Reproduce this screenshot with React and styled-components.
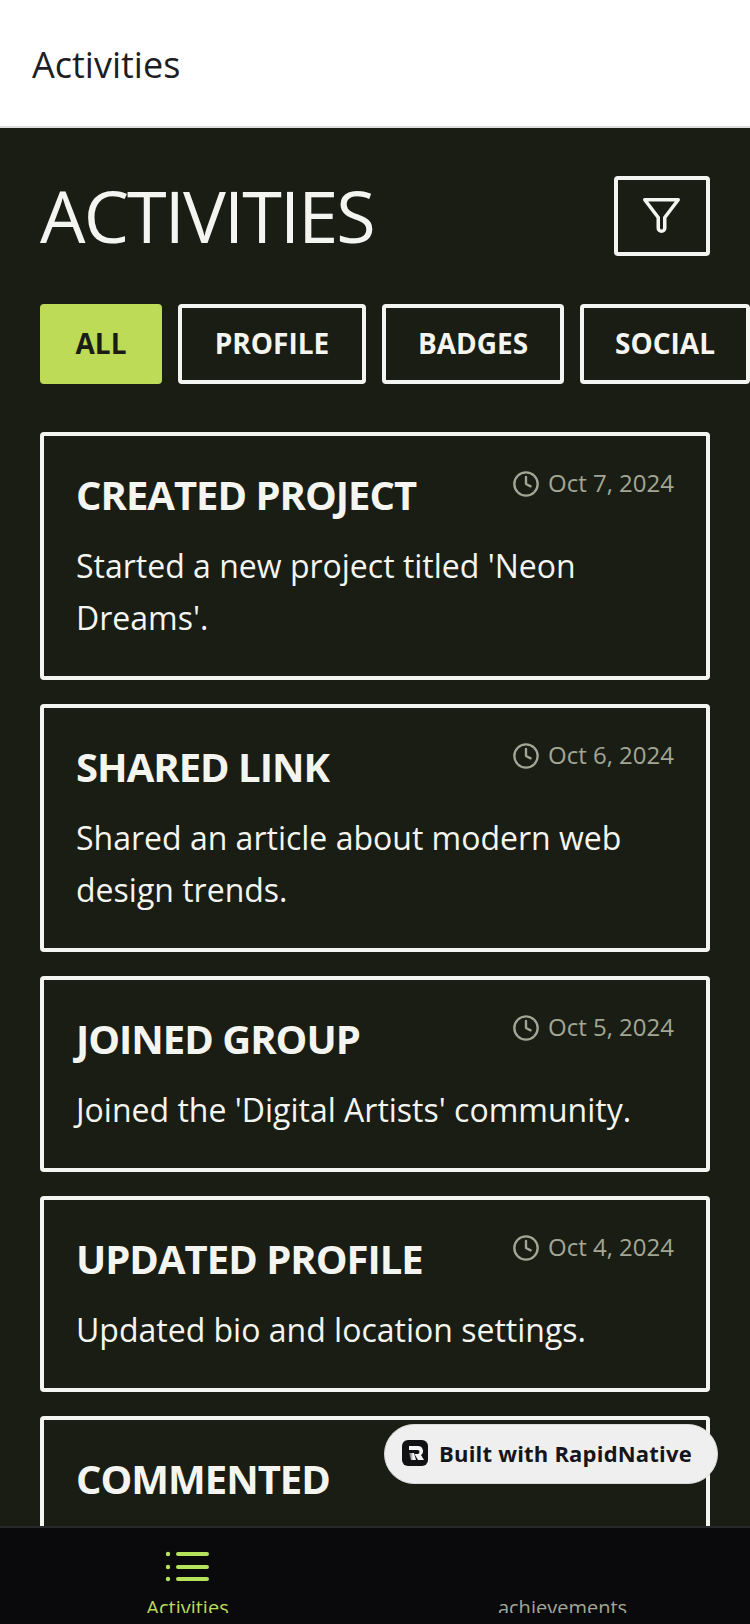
import React from 'react';
import styled, { createGlobalStyle } from 'styled-components';
import { Clock } from 'lucide-react';

const Global = createGlobalStyle`
  html, body { margin: 0; padding: 0; background: #1a1d14; }
  body { font-family: 'Open Sans', 'Noto Sans', sans-serif; }
`;

const Screen = styled.div`
  width: 750px;
  height: 1624px;
  display: flex;
  flex-direction: column;
  overflow: hidden;
  position: relative;
`;

const TopBar = styled.header`
  flex: none;
  height: 128px;
  box-sizing: border-box;
  background: #fff;
  border-bottom: 2px solid #dcdcdc;
  display: flex;
  align-items: center;
  padding: 2px 0 0 32px;
  font-size: 36px;
  color: #1c1e24;
`;

const Main = styled.main`
  flex: 1;
  min-height: 0;
  overflow: hidden;
  background: #1a1d14;
  padding: 48px 40px 0;
`;

const TitleRow = styled.div`
  display: flex;
  justify-content: space-between;
  align-items: center;
  height: 80px;
  margin-bottom: 48px;
`;

const Title = styled.h1`
  margin: 0;
  font-size: 72px;
  font-weight: 400;
  letter-spacing: -1.9px;
  color: #f4f5f0;
  line-height: 78px;
  padding-bottom: 2px;
`;

const FilterButton = styled.button`
  width: 96px;
  height: 80px;
  box-sizing: border-box;
  border: 4px solid #f4f5f0;
  border-radius: 4px;
  background: transparent;
  color: #f4f5f0;
  display: flex;
  align-items: center;
  justify-content: center;
  padding: 0;
`;

const Chips = styled.div`
  display: flex;
  gap: 16px;
  margin-bottom: 48px;
  width: 760px;
`;

const Chip = styled.div`
  flex: none;
  width: ${p => p.$width}px;
  height: 80px;
  box-sizing: border-box;
  padding-bottom: 2px;
  border: 4px solid ${p => (p.$active ? '#bddb57' : '#f4f5f0')};
  border-radius: 4px;
  background: ${p => (p.$active ? '#bddb57' : 'transparent')};
  color: ${p => (p.$active ? '#1a1d14' : '#f4f5f0')};
  font-size: 28px;
  font-weight: 700;
  display: flex;
  align-items: center;
  justify-content: center;
`;

const Cards = styled.div`
  display: flex;
  flex-direction: column;
  gap: 24px;
`;

const Card = styled.article`
  box-sizing: border-box;
  border: 4px solid #f4f5f0;
  border-radius: 4px;
  padding: 32px;
`;

const CardHead = styled.div`
  display: flex;
  justify-content: space-between;
  align-items: flex-start;
  margin-bottom: 18px;
`;

const CardTitle = styled.h2`
  margin: 0;
  font-size: 40px;
  font-weight: 700;
  letter-spacing: -1px;
  line-height: 54px;
  color: #f4f5f0;
`;

const DateBox = styled.div`
  display: flex;
  align-items: center;
  gap: 8px;
  color: #a3a695;
  font-size: 24px;
  line-height: 30px;
`;

const DateIcon = styled(Clock)`
  margin-top: 2px;
`;

const CardText = styled.p`
  margin: 0;
  font-size: 32px;
  line-height: 52px;
  color: #f4f5f0;
`;

const Badge = styled.div`
  position: absolute;
  left: 384px;
  top: 1424px;
  width: 334px;
  height: 60px;
  box-sizing: border-box;
  border-radius: 30px;
  background: #efefef;
  border: 1px solid #d8d8d8;
  display: flex;
  align-items: center;
  gap: 11px;
  padding: 0 0 2px 17px;
  font-size: 22px;
  font-weight: 700;
  letter-spacing: 0.2px;
  color: #16161a;
`;

const TabBar = styled.nav`
  flex: none;
  height: 98px;
  box-sizing: border-box;
  background: #0a0a0c;
  border-top: 2px solid #26282a;
  display: grid;
  grid-template-columns: 1fr 1fr;
`;

const Tab = styled.div`
  display: flex;
  flex-direction: column;
  align-items: center;
  padding-top: 20px;
  color: ${p => (p.$active ? '#bddb57' : '#a3a695')};
`;

const IconSlot = styled.div`
  height: 40px;
  margin-bottom: 10px;
`;

const TabLabel = styled.div`
  height: 15px;
  overflow: hidden;
  font-size: 20px;
  line-height: 20px;
`;

const FunnelIcon = () => (
  <svg width="44" height="44" viewBox="0 0 44 44" fill="none" stroke="currentColor" strokeWidth="3.5" strokeLinejoin="round">
    <path d="M4.750 5.750H38.250L24.750 23.500V34a3.250 3.250 0 0 1-6.500 0V23.500Z" />
  </svg>
);

const ListIcon = () => (
  <svg width="46" height="40" viewBox="0 0 46 40" fill="none" stroke="#b5e35b" strokeLinecap="round">
    <path strokeWidth="4" d="M13 6H42M13 19H42M13 31H42" />
    <g fill="#b5e35b" stroke="none">
      <circle cx="3" cy="6" r="2.2" />
      <circle cx="3" cy="19" r="2.2" />
      <circle cx="3" cy="31" r="2.2" />
    </g>
  </svg>
);

const Logo = () => (
  <svg width="26" height="26" viewBox="0 0 26 26">
    <defs>
      <linearGradient id="rn" x1="0" y1="0" x2="1" y2="0">
        <stop offset="0" stopColor="#555" />
        <stop offset="0.6" stopColor="#f4f4f4" />
      </linearGradient>
    </defs>
    <rect width="26" height="26" rx="6" fill="#111114" />
    <path d="M7 6h9a5 5 0 0 1 3 9l3 5h-6l-3.500-6h3a2 2 0 0 0 0-4H7z" fill="#f4f4f4" />
    <path d="M7 13h5l2 7H9z" fill="url(#rn)" />
  </svg>
);

const chips = [
  { label: 'ALL', width: 122, active: true },
  { label: 'PROFILE', width: 188 },
  { label: 'BADGES', width: 182 },
  { label: 'SOCIAL', width: 170 },
];

const activities = [
  { title: 'CREATED PROJECT', date: 'Oct 7, 2024', text: "Started a new project titled 'Neon Dreams'." },
  { title: 'SHARED LINK', date: 'Oct 6, 2024', text: 'Shared an article about modern web design trends.' },
  { title: 'JOINED GROUP', date: 'Oct 5, 2024', text: "Joined the 'Digital Artists' community." },
  { title: 'UPDATED PROFILE', date: 'Oct 4, 2024', text: 'Updated bio and location settings.' },
  { title: 'COMMENTED' },
];

export default function App() {
  return (
    <Screen>
      <Global />
      <TopBar>Activities</TopBar>
      <Main>
        <TitleRow>
          <Title>ACTIVITIES</Title>
          <FilterButton><FunnelIcon /></FilterButton>
        </TitleRow>
        <Chips>
          {chips.map(c => (
            <Chip key={c.label} $width={c.width} $active={c.active}>{c.label}</Chip>
          ))}
        </Chips>
        <Cards>
          {activities.map(a => (
            <Card key={a.title}>
              <CardHead>
                <CardTitle>{a.title}</CardTitle>
                {a.date && (
                  <DateBox><DateIcon size={28} strokeWidth={2} />{a.date}</DateBox>
                )}
              </CardHead>
              {a.text && <CardText>{a.text}</CardText>}
            </Card>
          ))}
        </Cards>
      </Main>
      <TabBar>
        <Tab $active>
          <IconSlot><ListIcon /></IconSlot>
          <TabLabel>Activities</TabLabel>
        </Tab>
        <Tab>
          <IconSlot />
          <TabLabel>achievements</TabLabel>
        </Tab>
      </TabBar>
      <Badge><Logo />Built with RapidNative</Badge>
    </Screen>
  );
}
